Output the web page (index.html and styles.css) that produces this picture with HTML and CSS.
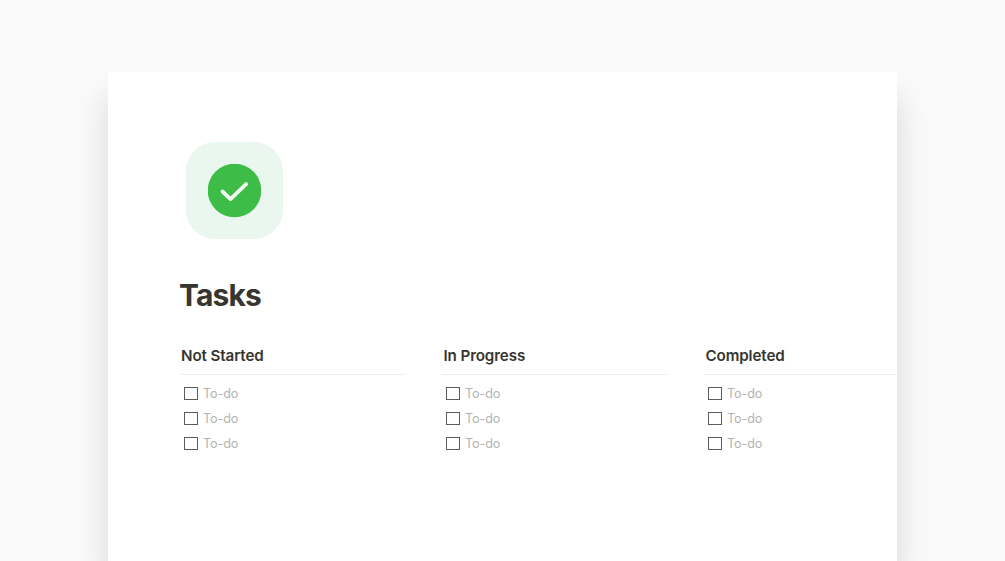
FILE: index.html
```html
<!DOCTYPE html>
<html lang="en">
<head>
<meta charset="utf-8">
<title>Tasks</title>
<link rel="stylesheet" href="styles.css">
</head>
<body>
<main class="card">
  <div class="icon">
    <svg width="54" height="54" viewBox="0.5 0.5 54 54" aria-hidden="true">
      <circle cx="27" cy="27" r="26.8" fill="#3dbd48"/>
      <path d="M15 28 L23 35.6 L38.6 20.6" fill="none" stroke="#f2faf2" stroke-width="3.8" stroke-linecap="round" stroke-linejoin="round"/>
    </svg>
  </div>
  <h1 class="title">Tasks</h1>
  <div class="board">
    <section class="col">
      <h2 class="col-title">Not Started</h2>
      <ul class="todos">
        <li class="todo"><span class="box"></span>To-do</li>
        <li class="todo"><span class="box"></span>To-do</li>
        <li class="todo"><span class="box"></span>To-do</li>
      </ul>
    </section>
    <section class="col">
      <h2 class="col-title">In Progress</h2>
      <ul class="todos">
        <li class="todo"><span class="box"></span>To-do</li>
        <li class="todo"><span class="box"></span>To-do</li>
        <li class="todo"><span class="box"></span>To-do</li>
      </ul>
    </section>
    <section class="col">
      <h2 class="col-title">Completed</h2>
      <ul class="todos">
        <li class="todo"><span class="box"></span>To-do</li>
        <li class="todo"><span class="box"></span>To-do</li>
        <li class="todo"><span class="box"></span>To-do</li>
      </ul>
    </section>
  </div>
</main>
</body>
</html>
```
FILE: styles.css
```css
* { box-sizing: border-box; }
html, body { height: 100%; }
body {
  margin: 0;
  background: #fafafa;
  overflow: hidden;
  font-family: Inter, "Liberation Sans", sans-serif;
  padding: 72px 108px 0;
}
.card {
  width: 789px;
  height: 489px;
  background: #fff;
  box-shadow: 0 24px 32px rgba(0, 0, 0, 0.14);
  padding: 70px 0 0 72px;
  overflow: hidden;
}
.icon {
  width: 97px;
  height: 97px;
  margin-left: 6px;
  border-radius: 29px;
  background: #e9f7ee;
  display: flex;
  align-items: center;
  justify-content: center;
}
.title {
  margin: 37px 0 0 -1px;
  font-size: 30px;
  line-height: 38px;
  font-weight: 700;
  letter-spacing: -0.85px;
  color: #37352f;
}
.board {
  display: flex;
  gap: 37px;
  margin-top: 30px;
  width: 760px;
}
.col { flex: 0 0 225px; }
.col-title {
  margin: 0;
  padding: 1px 0 7px 1px;
  font-size: 15.2px;
  line-height: 22px;
  font-weight: 600;
  letter-spacing: -0.12px;
  color: #37352f;
  border-bottom: 1px solid #ececeb;
}
.col:nth-child(n + 2) .col-title { padding-left: 1.5px; }
.todos {
  list-style: none;
  margin: 6px 0 0;
  padding: 0;
}
.todo {
  display: flex;
  align-items: center;
  height: 25px;
  padding-left: 4px;
  font-size: 12.6px;
  letter-spacing: -0.12px;
  color: #b3b3b1;
}
.box {
  width: 13.5px;
  height: 13.5px;
  margin-right: 5.5px;
  border: 1.6px solid #5e5c57;
}
```
